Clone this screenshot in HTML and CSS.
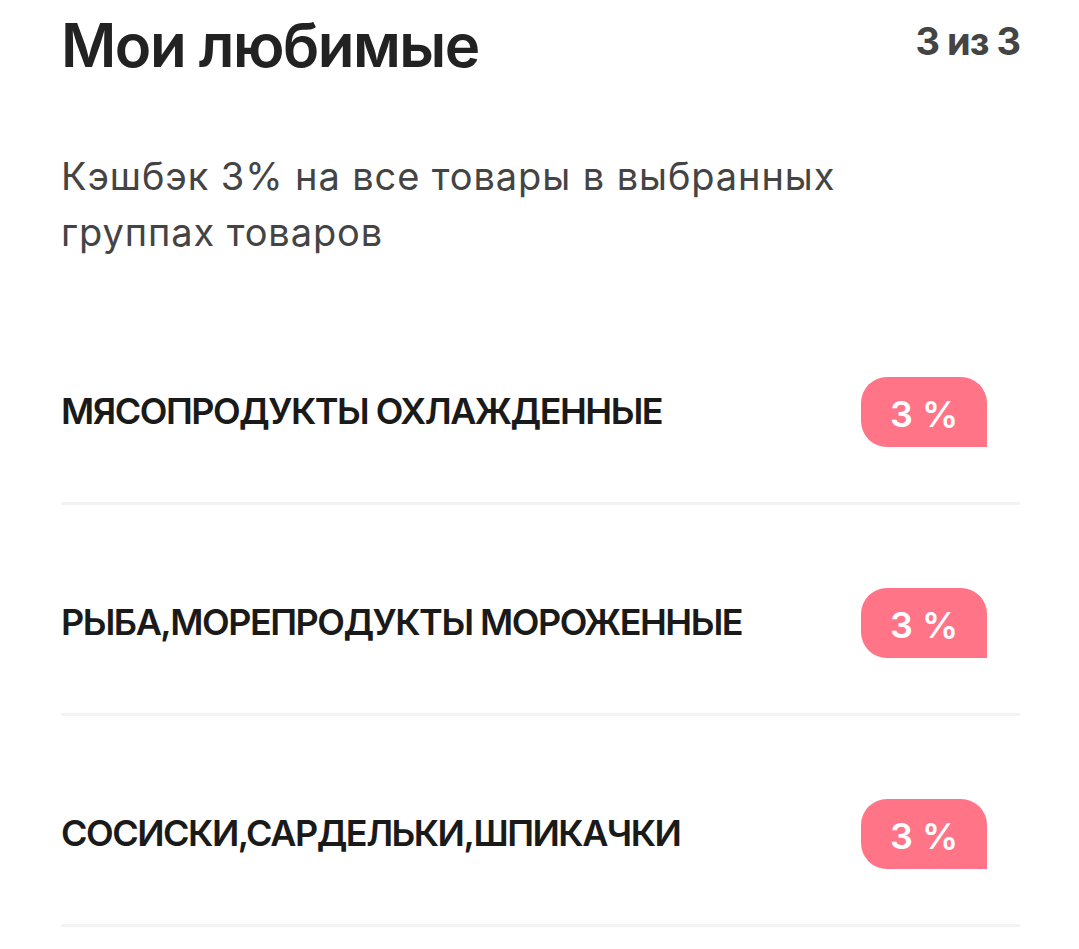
FILE: index.html
```html
<!DOCTYPE html>
<html lang="ru">
<head>
<meta charset="utf-8">
<title>Мои любимые</title>
<link rel="stylesheet" href="styles.css">
</head>
<body>
<main class="page">
  <header class="head">
    <h1 class="title">Мои любимые</h1>
    <span class="count">3 из 3</span>
  </header>
  <p class="subtitle">Кэшбэк 3% на все товары в выбранных группах товаров</p>
  <ul class="list">
    <li class="row">
      <span class="name">МЯСОПРОДУКТЫ ОХЛАЖДЕННЫЕ</span>
      <span class="badge">3 %</span>
    </li>
    <li class="row">
      <span class="name">РЫБА,МОРЕПРОДУКТЫ МОРОЖЕННЫЕ</span>
      <span class="badge">3 %</span>
    </li>
    <li class="row">
      <span class="name">СОСИСКИ,САРДЕЛЬКИ,ШПИКАЧКИ</span>
      <span class="badge">3 %</span>
    </li>
  </ul>
</main>
</body>
</html>
```

FILE: styles.css
```css
* { box-sizing: border-box; }
html, body { margin: 0; padding: 0; background: #ffffff; }
body { font-family: Inter, "Noto Sans", sans-serif; }

.page {
  padding: 9px 59px 0 61px;
}

.head {
  display: flex;
  justify-content: space-between;
  align-items: flex-start;
}

.title {
  margin: 0;
  font-size: 60px;
  line-height: 1.2;
  font-weight: 600;
  color: #222222;
  letter-spacing: -1.5px;
}

.count {
  margin-top: 10px;
  font-size: 38px;
  line-height: 1.2;
  font-weight: 700;
  color: #444444;
  letter-spacing: -1px;
}

.subtitle {
  margin: 67px 0 0;
  width: 820px;
  font-size: 38px;
  line-height: 56px;
  font-weight: 400;
  color: #444444;
  letter-spacing: 0.9px;
}

.list {
  list-style: none;
  margin: 34px 0 0;
  padding: 0;
}

.row {
  display: flex;
  align-items: center;
  justify-content: space-between;
  padding: 83px 33px 55px 0;
  border-bottom: 3px solid #f3f3f3;
}

.name {
  font-size: 36px;
  line-height: 1.2;
  font-weight: 600;
  color: #1a1a1a;
  letter-spacing: -1.5px;
}

.badge {
  display: flex;
  align-items: center;
  justify-content: center;
  width: 126px;
  height: 70px;
  border-radius: 26px 26px 0 26px;
  background: #ff7487;
  color: #ffffff;
  font-size: 36px;
  font-weight: 600;
  padding-top: 4px;
}
```
